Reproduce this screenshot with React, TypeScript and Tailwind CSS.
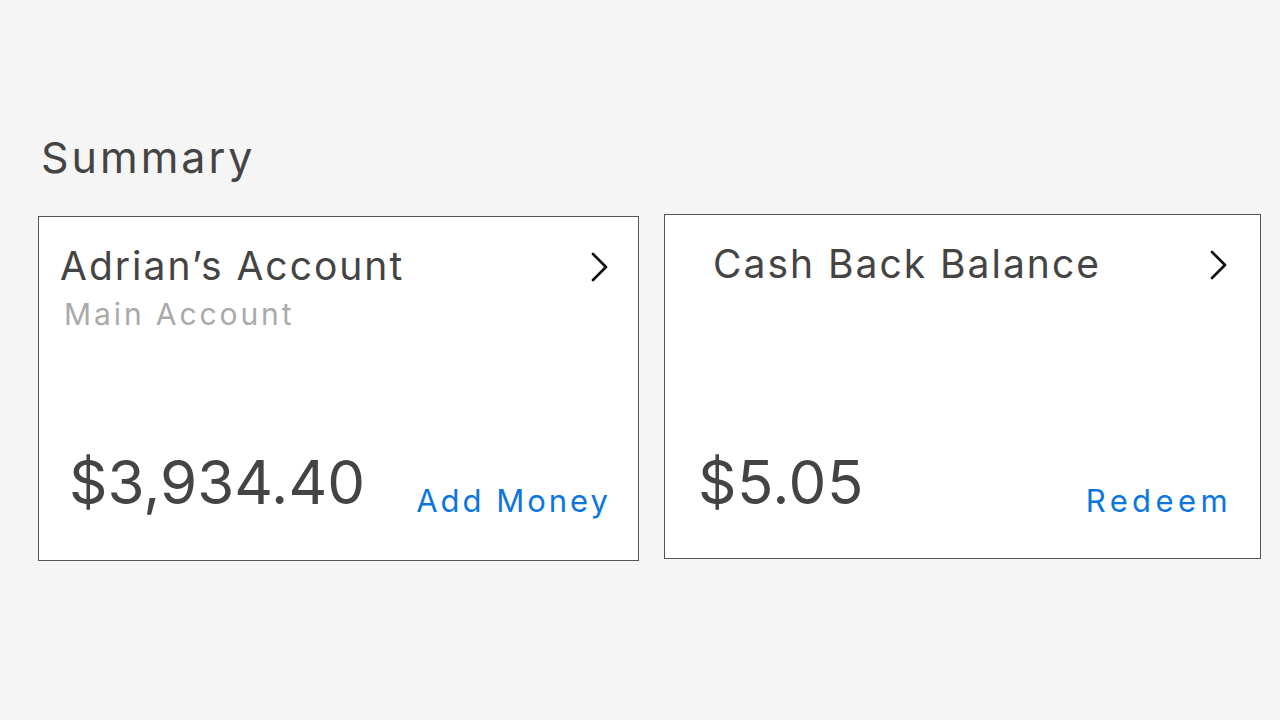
import React from "react";

const Chevron = () => (
  <svg width="20" height="32" viewBox="0 0 20 32" fill="none">
    <path d="M3 3 L16 16 L3 29" stroke="#111" strokeWidth="2.7" strokeLinecap="round" strokeLinejoin="round" />
  </svg>
);

export default function App() {
  return (
    <div className="w-[1280px] h-[720px] bg-[#f5f5f5] text-[#444] overflow-hidden" style={{ fontFamily: "Inter, 'Noto Sans', sans-serif" }}>
      <div className="pl-[41px] pt-[129px]">
        <h1 className="text-[43px] leading-[56px] font-normal tracking-[3px]">Summary</h1>
      </div>
      <div className="flex items-start gap-[25px] pl-[38px] mt-[29px]">
        <div className="w-[601px] h-[345px] mt-[2px] border border-[#555] bg-white flex flex-col justify-between">
          <div className="flex justify-between pl-[21px] pr-[28px] pt-[25px]">
            <div>
              <div className="text-[39px] leading-[48px] tracking-[2px]">Adrian’s Account</div>
              <div className="text-[30px] leading-[40px] tracking-[2.9px] text-[#aaa] pl-[4px] mt-[4px]">Main Account</div>
            </div>
            <div className="pt-[9px]"><Chevron /></div>
          </div>
          <div className="flex justify-between items-end pl-[30px] pr-[27px] pb-[42px]">
            <div className="text-[60px] leading-[72px]">$3,934.40</div>
            <div className="text-[31px] leading-[34px] tracking-[3px] text-[#0b76e0]">Add Money</div>
          </div>
        </div>
        <div className="w-[597px] h-[345px] border border-[#555] bg-white flex flex-col justify-between">
          <div className="flex justify-between pl-[48px] pr-[31px] pt-[25px]">
            <div className="text-[39px] leading-[48px] tracking-[2px]">Cash Back Balance</div>
            <div className="pt-[9px]"><Chevron /></div>
          </div>
          <div className="flex justify-between items-end pl-[33px] pr-[28px] pb-[40px]">
            <div className="text-[60px] leading-[72px] tracking-[0.5px]">$5.05</div>
            <div className="text-[31px] leading-[34px] tracking-[4.4px] text-[#0b76e0]">Redeem</div>
          </div>
        </div>
      </div>
    </div>
  );
}
